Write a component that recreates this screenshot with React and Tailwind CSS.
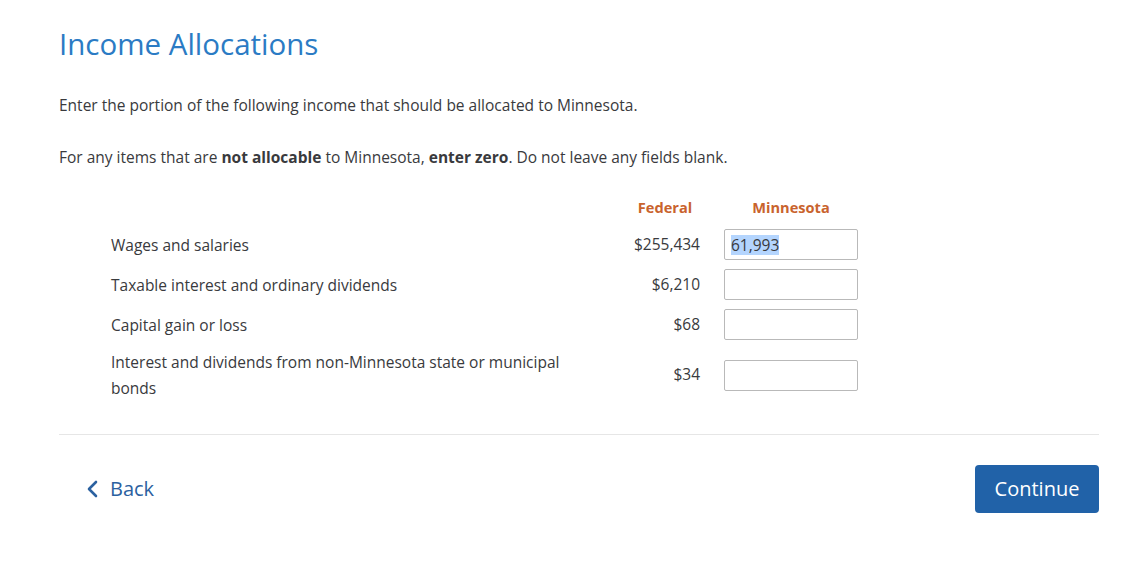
const rows = [
  { label: 'Wages and salaries', federal: '$255,434', value: '61,993' },
  { label: 'Taxable interest and ordinary dividends', federal: '$6,210', value: '' },
  { label: 'Capital gain or loss', federal: '$68', value: '' },
  {
    label: 'Interest and dividends from non-Minnesota state or municipal bonds',
    federal: '$34',
    value: '',
  },
]

function AmountBox({ value }) {
  return (
    <div className="w-[134px] h-[31px] border border-[#b9b9b9] rounded-[2px] bg-white flex items-center pl-[6px] text-[15.5px] text-[#393a3d]">
      {value && <span className="bg-[#b4d5fe] leading-[20px]">{value}</span>}
    </div>
  )
}

export default function App() {
  return (
    <div
      className="bg-white min-h-screen w-[1146px] pl-[59px] pr-[47px] pt-[26px] text-[#393a3d]"
      style={{ fontFamily: '"Open Sans", Lato, sans-serif' }}
    >
      <h1 className="text-[29.5px] leading-[36px] text-[#2b7bc4]">Income Allocations</h1>

      <p className="mt-[31px] text-[15.5px] leading-6">
        Enter the portion of the following income that should be allocated to Minnesota.
      </p>
      <p className="mt-[28px] text-[15.5px] leading-6">
        For any items that are <b>not allocable</b> to Minnesota, <b>enter zero</b>. Do not leave any fields blank.
      </p>

      <div className="mt-[29px] pl-[52px]">
        <div className="flex items-center h-5 text-[14.6px] font-bold text-[#c9632d]">
          <div className="w-[519px]" />
          <div className="w-[70px] text-center">Federal</div>
          <div className="w-[24px]" />
          <div className="w-[134px] text-center">Minnesota</div>
        </div>

        <div className="mt-[11px] flex flex-col gap-[9px]">
          {rows.map((r) => (
            <div key={r.label} className="flex items-center min-h-[31px] text-[15.5px]">
              <div className="w-[470px] leading-[26px]">{r.label}</div>
              <div className="w-[49px]" />
              <div className="w-[70px] text-right whitespace-nowrap">{r.federal}</div>
              <div className="w-[24px]" />
              <AmountBox value={r.value} />
            </div>
          ))}
        </div>
      </div>

      <div className="mt-[33px] border-t border-[#e6e6e6]" />

      <div className="mt-[30px] flex items-center justify-between">
        <button className="flex items-center gap-[12px] pl-[27px] text-[20px] font-medium text-[#2b61a0]">
          <svg width="12" height="18" viewBox="0 0 12 18" fill="none">
            <path d="M10 2 L3 9 L10 16" stroke="currentColor" strokeWidth="2.6" strokeLinecap="round" strokeLinejoin="round" />
          </svg>
          Back
        </button>
        <button className="w-[124px] h-[48px] rounded-[4px] bg-[#2162a8] text-white text-[20px]">
          Continue
        </button>
      </div>
    </div>
  )
}
